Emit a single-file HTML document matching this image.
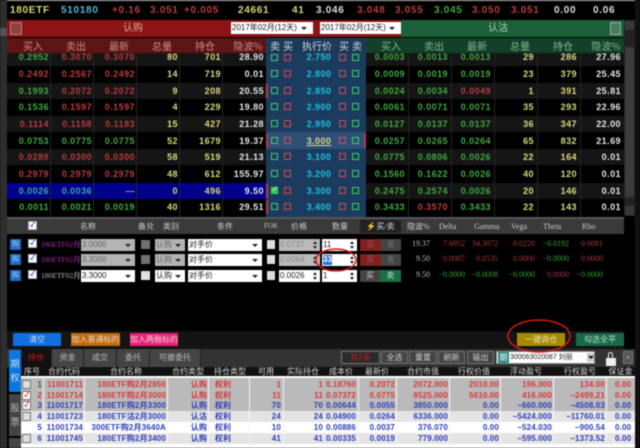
<!DOCTYPE html>
<html><head><meta charset="utf-8"><style>
html,body{margin:0;padding:0;background:#000}
#p{position:relative;width:640px;height:448px;overflow:hidden;background:#000;font:9px "Liberation Sans","WenQuanYi Zen Hei","Noto Sans CJK SC",sans-serif;color:#ddd;filter:blur(.45px)}
#p div,#p span,#p b{position:absolute;white-space:nowrap}
.t span{top:4px;font-size:10px;letter-spacing:.7px;font-weight:bold}
.h span{top:0;font:10px "Noto Sans CJK SC","WenQuanYi Zen Hei",sans-serif;line-height:15px;text-align:center}
.r{left:7px;width:617px;height:17px}
.r span{top:3px;width:42px;text-align:right;line-height:11px;letter-spacing:.45px;font-size:9px;font-weight:bold}
.r span:nth-child(1){left:0}.r span:nth-child(2){left:43px}.r span:nth-child(3){left:86px}.r span:nth-child(4){left:129px}.r span:nth-child(5){left:172px}.r span:nth-child(6){left:215px}
.r span:nth-child(7){left:294px;width:36px;text-align:center;color:#20c0e0}
.r span:nth-child(8){left:356px}.r span:nth-child(9){left:399px}.r span:nth-child(10){left:442px}.r span:nth-child(11){left:485px}.r span:nth-child(12){left:528px}.r span:nth-child(13){left:572px}
.r span:nth-child(4),.r span:nth-child(5),.r span:nth-child(11),.r span:nth-child(12){color:#d8d880}
.r span:nth-child(6),.r span:nth-child(13){color:#e4e4e4}
.r span.g{color:#3fa83f}.r span.e{color:#b83c3c}
.bk{width:5px;height:5px;border:1.5px solid #3fd060}
.bk.x{border-color:#d84c58}
.v{top:53px;width:1px;height:164px;background:#242424}
.sel{height:12px;background:#fff;color:#222;font:8px "Liberation Sans","WenQuanYi Zen Hei",sans-serif;line-height:12px;padding-left:1px;box-sizing:border-box}
.sel.o{background:#b4b4b4;color:#666}
.sel i{position:absolute;right:4px;top:5px;border:3px solid transparent;border-top:3px solid #222;border-bottom:0}
.spin i{position:absolute;right:3px;top:2px;border:2.5px solid transparent;border-bottom:3px solid #222;border-top:0}
.spin u{position:absolute;right:3px;top:7px;border:2.5px solid transparent;border-top:3px solid #222;border-bottom:0}
.ck{width:7px;height:7px;background:#fff;border:1px solid #aaa;color:#1040c0;font-size:7px;line-height:7px;text-align:center;font-weight:bold}
.bl{left:10px;width:11px;height:11px;background:#1a6ec8;color:#bcd;font:7px/11px "WenQuanYi Zen Hei",sans-serif;text-align:center}
.lh span{top:222px;font:8px "Liberation Serif","WenQuanYi Zen Hei",serif;color:#ccc;line-height:9px}
.gr{font:7.5px/12px "Liberation Serif","WenQuanYi Zen Hei",serif}
.lr span.n{font:8px/12px "Liberation Serif",serif;text-align:right;width:38px}
.btn{top:333px;height:13px;color:#e8d8c8;font:8px/13px "WenQuanYi Zen Hei","Noto Sans CJK SC",sans-serif;text-align:center}
.tab{top:349px;height:18px;background:#444;color:#bbb;font:8px/18px "WenQuanYi Zen Hei",sans-serif;text-align:center;border-right:1px solid #222;box-sizing:border-box}
.tb{top:351px;height:13px;background:#444;color:#ccc;border:1px solid #777;font:8px/11px "WenQuanYi Zen Hei",sans-serif;text-align:center;box-sizing:border-box}
.bh span{top:367px;height:10px;color:#ddd;font:8px/10px "WenQuanYi Zen Hei",sans-serif;text-align:center}
.br{left:21px;width:614px;height:11px}
.br span{top:0;line-height:11px;font-size:8px;letter-spacing:.15px;text-align:right;font-weight:bold}
.br span:nth-child(1){left:1px;width:20px}
.br span:nth-child(2){left:18px;width:44px}
.br span:nth-child(3){left:61px;width:84px}
.br span:nth-child(4){left:146px;width:40px}
.br span:nth-child(5){left:186px;width:32px;text-align:center}
.br span:nth-child(6){left:226px;width:34px}
.br span:nth-child(7){left:260px;width:42px}
.br span:nth-child(8){left:300px;width:35px}
.br span:nth-child(9){left:335px;width:39px}
.br span:nth-child(10){left:374px;width:53px}
.br span:nth-child(11){left:427px;width:51px}
.br span:nth-child(12){left:478px;width:53px}
.br span:nth-child(13){left:531px;width:53px}
.br span:nth-child(14){left:594px;width:20px;text-align:left}
.re span{color:#d83838}.bu span{color:#3040b8}
.bc{left:22px;width:7px;height:7px;background:#ddd;border:1px solid #777;color:#d01818;font-size:7px;line-height:7px;text-align:center;font-weight:bold}
.cl{top:378px;width:1px;height:70px;background:#f4f4f4}
.mb{height:12px;font:8px/12px "WenQuanYi Zen Hei",sans-serif;text-align:center}
</style></head><body><div id="p">
<div style="left:0;top:0;width:640px;height:1px;background:#bbb"></div>
<div style="left:0;top:0;width:7px;height:448px;background:#2e2e2e"></div>
<div style="left:0;top:28px;width:7px;height:8px;background:#555"></div>
<div style="left:635px;top:0;width:5px;height:448px;background:#111"></div>

<div class="t" style="left:0;top:1px;width:630px;height:18px">
<span style="left:10px;color:#d8d870">180ETF</span><span style="left:61px;color:#50b8d8">510180</span><span style="left:112px;color:#b83c3c">+0.16</span><span style="left:150px;color:#b83c3c">3.051</span><span style="left:184px;color:#b83c3c">+0.005</span><span style="left:238px;color:#d8d870">24661</span><span style="left:292px;color:#d8d870">41</span><span style="left:316px;color:#ddd">3.046</span><span style="left:357px;color:#b83c3c">3.048</span><span style="left:395px;color:#b83c3c">3.055</span><span style="left:434px;color:#3fa83f">3.045</span><span style="left:472px;color:#b83c3c">3.050</span><span style="left:511px;color:#b83c3c">3.051</span><span style="left:554px;color:#ddd">0.00</span><span style="left:593px;color:#ddd">0.06</span></div>

<div style="left:7px;top:20px;width:394px;height:17px;background:#8c1414"></div>
<div style="left:401px;top:20px;width:223px;height:17px;background:#1b6038"></div>
<div style="left:10px;top:22px;width:10px;height:11px;border:1px solid #c08080;background:#8c4040"></div>
<div style="left:610px;top:22px;width:9px;height:11px;border:1px solid #90b8a0;background:#4a7a60"></div>
<div style="left:123px;top:21px;font:10px/15px 'WenQuanYi Zen Hei',sans-serif;color:#d8b0a8">认购</div>
<div style="left:488px;top:21px;font:10px/15px 'WenQuanYi Zen Hei',sans-serif;color:#b0d0b8">认沽</div>
<div class="sel" style="left:231px;top:22px;width:82px">2017年02月(12天)<i style="right:6px"></i></div>
<div class="sel" style="left:320px;top:22px;width:81px">2017年02月(12天)<i style="right:6px"></i></div>

<div style="left:7px;top:38px;width:259px;height:15px;background:#5e1414"></div>
<div style="left:266px;top:38px;width:100px;height:15px;background:#1b3a58"></div>
<div style="left:366px;top:38px;width:258px;height:15px;background:#124028"></div>
<div class="h" style="left:0;top:38px;width:640px;height:15px">
<span style="left:18px;width:30px;color:#c89088">买入</span><span style="left:61px;width:30px;color:#c89088">卖出</span><span style="left:104px;width:30px;color:#c89088">最新</span><span style="left:147px;width:30px;color:#c89088">总量</span><span style="left:190px;width:30px;color:#c89088">持仓</span><span style="left:231px;width:34px;color:#c89088">隐波%</span>
<span style="left:269px;width:12px;color:#d0d8e0">卖</span><span style="left:282px;width:12px;color:#d0d8e0">买</span><span style="left:299px;width:36px;color:#d0d8e0">执行价</span><span style="left:338px;width:12px;color:#d0d8e0">买</span><span style="left:351px;width:12px;color:#d0d8e0">卖</span>
<span style="left:376px;width:30px;color:#80b890">买入</span><span style="left:419px;width:30px;color:#80b890">卖出</span><span style="left:462px;width:30px;color:#80b890">最新</span><span style="left:505px;width:30px;color:#80b890">总量</span><span style="left:548px;width:30px;color:#80b890">持仓</span><span style="left:589px;width:34px;color:#80b890">隐波%</span></div>

<div style="left:7px;top:53px;width:617px;height:13px;background:#151515"></div>
<div style="left:7px;top:83px;width:617px;height:16px;background:#151515"></div>
<div style="left:7px;top:116px;width:617px;height:16px;background:#151515"></div>
<div style="left:7px;top:149px;width:617px;height:16px;background:#151515"></div>
<div style="left:7px;top:183px;width:259px;height:16px;background:#00008c"></div>
<div style="left:366px;top:183px;width:258px;height:16px;background:#151515"></div>
<div style="left:266px;top:53px;width:100px;height:164px;background:#1b3c5e"></div>
<div style="left:266px;top:132px;width:100px;height:17px;background:#2e5078"></div>
<div class="v" style="left:50px"></div><div class="v" style="left:93px"></div><div class="v" style="left:136px"></div><div class="v" style="left:179px"></div><div class="v" style="left:222px"></div>
<div class="v" style="left:408px"></div><div class="v" style="left:451px"></div><div class="v" style="left:494px"></div><div class="v" style="left:537px"></div><div class="v" style="left:580px"></div>

<div class="r" style="top:49px"><span class="g">0.2952</span><span class="e">0.3070</span><span class="e">0.3070</span><span>80</span><span>701</span><span>28.90</span><span>2.750</span><span class="g">0.0003</span><span class="g">0.0013</span><span class="g">0.0013</span><span>29</span><span>286</span><span>27.96</span></div>
<div class="r" style="top:66px"><span class="e">0.2492</span><span class="e">0.2567</span><span class="e">0.2492</span><span>14</span><span>719</span><span>0.01</span><span>2.800</span><span class="g">0.0009</span><span class="g">0.0019</span><span class="g">0.0019</span><span>23</span><span>379</span><span>25.45</span></div>
<div class="r" style="top:83px"><span class="g">0.1993</span><span class="e">0.2072</span><span class="e">0.2072</span><span>9</span><span>208</span><span>20.55</span><span>2.850</span><span class="g">0.0024</span><span class="g">0.0034</span><span class="e">0.0049</span><span>1</span><span>391</span><span>25.81</span></div>
<div class="r" style="top:99px"><span class="g">0.1536</span><span class="e">0.1597</span><span class="e">0.1597</span><span>4</span><span>229</span><span>19.80</span><span>2.900</span><span class="g">0.0061</span><span class="g">0.0071</span><span class="g">0.0071</span><span>35</span><span>293</span><span>22.96</span></div>
<div class="r" style="top:116px"><span class="e">0.1114</span><span class="e">0.1158</span><span class="e">0.1183</span><span>15</span><span>427</span><span>21.28</span><span>2.950</span><span class="g">0.0127</span><span class="g">0.0137</span><span class="g">0.0137</span><span>36</span><span>347</span><span>22.00</span></div>
<div class="r" style="top:133px"><span class="g">0.0753</span><span class="g">0.0775</span><span class="g">0.0775</span><span>52</span><span>1679</span><span>19.37</span><span style="color:#d8d880;text-decoration:underline">3.000</span><span class="g">0.0257</span><span class="g">0.0265</span><span class="g">0.0264</span><span>65</span><span>832</span><span>21.69</span></div>
<div class="r" style="top:149px"><span class="e">0.0289</span><span class="e">0.0300</span><span class="e">0.0300</span><span>58</span><span>519</span><span>21.13</span><span>3.100</span><span class="g">0.0775</span><span class="g">0.0806</span><span class="g">0.0026</span><span>22</span><span>164</span><span>0.01</span></div>
<div class="r" style="top:166px"><span class="e">0.2979</span><span class="e">0.2979</span><span class="e">0.2979</span><span>48</span><span>612</span><span>155.97</span><span>3.200</span><span class="g">0.1560</span><span class="g">0.1622</span><span class="g">0.0026</span><span>40</span><span>120</span><span>0.01</span></div>
<div class="r" style="top:183px"><span style="color:#40a8a0">0.0026</span><span style="color:#40a8a0">0.0036</span><span style="color:#9098e0">—</span><span>0</span><span>496</span><span>9.50</span><span>3.300</span><span class="g">0.2475</span><span class="g">0.2574</span><span class="g">0.0026</span><span>20</span><span>146</span><span>0.01</span></div>
<div class="r" style="top:199px"><span class="g">0.0011</span><span class="g">0.0021</span><span class="g">0.0019</span><span>40</span><span>1316</span><span>29.51</span><span>3.400</span><span class="g">0.3433</span><span class="e">0.3570</span><span class="g">0.3433</span><span>22</span><span>143</span><span>0.01</span></div>

<div class="bk" style="left:271px;top:54px"></div><div class="bk x" style="left:284px;top:54px"></div><div class="bk x" style="left:339px;top:54px"></div><div class="bk" style="left:352px;top:54px"></div>
<div class="bk" style="left:271px;top:70px"></div><div class="bk x" style="left:284px;top:70px"></div><div class="bk x" style="left:339px;top:70px"></div><div class="bk" style="left:352px;top:70px"></div>
<div class="bk" style="left:271px;top:87px"></div><div class="bk x" style="left:284px;top:87px"></div><div class="bk x" style="left:339px;top:87px"></div><div class="bk" style="left:352px;top:87px"></div>
<div class="bk" style="left:271px;top:103px"></div><div class="bk x" style="left:284px;top:103px"></div><div class="bk x" style="left:339px;top:103px"></div><div class="bk" style="left:352px;top:103px"></div>
<div class="bk" style="left:271px;top:120px"></div><div class="bk x" style="left:284px;top:120px"></div><div class="bk x" style="left:339px;top:120px"></div><div class="bk" style="left:352px;top:120px"></div>
<div class="bk" style="left:271px;top:137px"></div><div class="bk x" style="left:284px;top:137px"></div><div class="bk x" style="left:339px;top:137px"></div><div class="bk" style="left:352px;top:137px"></div>
<div class="bk" style="left:271px;top:153px"></div><div class="bk x" style="left:284px;top:153px"></div><div class="bk x" style="left:339px;top:153px"></div><div class="bk" style="left:352px;top:153px"></div>
<div class="bk" style="left:271px;top:170px"></div><div class="bk x" style="left:284px;top:170px"></div><div class="bk x" style="left:339px;top:170px"></div><div class="bk" style="left:352px;top:170px"></div>
<div class="bk" style="left:271px;top:187px;background:#30c850;color:#fff;font-size:6px;line-height:5px;text-align:center">✓</div><div class="bk x" style="left:284px;top:187px"></div><div class="bk x" style="left:339px;top:187px"></div><div class="bk" style="left:352px;top:187px"></div>
<div class="bk" style="left:271px;top:203px"></div><div class="bk x" style="left:284px;top:203px"></div><div class="bk x" style="left:339px;top:203px"></div><div class="bk" style="left:352px;top:203px"></div>
<div style="left:266px;top:84px;width:2px;height:14px;background:#b83c48"></div><div style="left:266px;top:134px;width:2px;height:14px;background:#b83c48"></div><div style="left:266px;top:184px;width:2px;height:14px;background:#b83c48"></div><div style="left:266px;top:200px;width:2px;height:14px;background:#b83c48"></div><div style="left:364px;top:134px;width:2px;height:14px;background:#b83c48"></div>

<div style="left:624px;top:20px;width:11px;height:196px;background:#222"></div>
<div style="left:625px;top:47px;width:9px;height:150px;background:#3c3c3c"></div>
<div style="left:625px;top:21px;width:9px;height:9px;background:#3a3a3a"></div>
<div style="left:625px;top:206px;width:9px;height:9px;background:#3a3a3a"></div>

<div style="left:7px;top:217px;width:617px;height:2px;background:#555"></div>
<div style="left:7px;top:219px;width:617px;height:15px;background:#3a3a3a"></div>
<div class="lh">
<div class="ck" style="left:28px;top:221px">✓</div>
<span style="left:80px">名称</span><span style="left:138px">备兑</span><span style="left:163px">类别</span><span style="left:217px">条件</span><span style="left:264px;font-size:7px">FOK</span><span style="left:291px">价格</span><span style="left:332px">数量</span>
<span style="left:360px;top:220px;width:41px;height:13px;background:#222;line-height:13px;text-align:center;color:#ddd">⚡买/卖</span>
<span style="left:407px">隐波%</span><span style="left:439px">Delta</span><span style="left:474px">Gamma</span><span style="left:511px">Vega</span><span style="left:543px">Theta</span><span style="left:582px">Rho</span></div>

<div class="bl" style="top:239px">购</div><div class="bl" style="top:254px">购</div><div class="bl" style="top:270px">购</div>
<div class="ck" style="left:28px;top:239px">✓</div><div class="ck" style="left:28px;top:254px">✓</div><div class="ck" style="left:28px;top:270px">✓</div>
<span class="gr" style="left:41px;top:239px;color:#b030b0">180ETF02月</span><span class="gr" style="left:41px;top:254px;color:#b030b0">180ETF02月</span><span class="gr" style="left:41px;top:270px;color:#bbb">180ETF02月</span>
<div class="sel o" style="left:81px;top:239px;width:54px">3.0000<i></i></div><div class="sel o" style="left:81px;top:254px;width:54px">3.3000<i></i></div><div class="sel" style="left:81px;top:270px;width:54px">3.3000<i></i></div>
<div style="left:141px;top:240px;width:9px;height:9px;background:#707070"></div><div style="left:141px;top:255px;width:9px;height:9px;background:#707070"></div><div style="left:141px;top:271px;width:9px;height:9px;background:#e0e0e0"></div>
<div class="sel o" style="left:155px;top:239px;width:30px">认购<i></i></div><div class="sel o" style="left:155px;top:254px;width:30px">认购<i></i></div><div class="sel" style="left:155px;top:270px;width:30px">认购<i></i></div>
<div class="sel" style="left:188px;top:239px;width:74px">对手价<i></i></div><div class="sel" style="left:188px;top:254px;width:74px">对手价<i></i></div><div class="sel" style="left:188px;top:270px;width:74px">对手价<i></i></div>
<div style="left:267px;top:240px;width:8px;height:9px;background:#ddd"></div><div style="left:267px;top:255px;width:8px;height:9px;background:#ddd"></div><div style="left:267px;top:271px;width:8px;height:9px;background:#ddd"></div>
<div class="sel o spin" style="left:279px;top:239px;width:41px;background:#bbb;color:#888">0.0737<i></i><u></u></div><div class="sel o spin" style="left:279px;top:254px;width:41px;background:#bbb;color:#888">0.0064<i></i><u></u></div><div class="sel spin" style="left:279px;top:270px;width:41px">0.0026<i></i><u></u></div>
<div class="sel spin" style="left:322px;top:239px;width:35px">11<i></i><u></u></div><div class="sel spin" style="left:322px;top:254px;width:35px"><b style="left:1px;top:1px;width:9px;height:10px;background:#2a70d8;color:#fff;line-height:10px">33</b><i></i><u></u></div><div class="sel spin" style="left:322px;top:270px;width:35px">1<i></i><u></u></div>
<div class="mb" style="left:360px;top:239px;width:21px;background:#802020;color:#a05050">买</div><div class="mb" style="left:381px;top:239px;width:20px;background:#444;color:#777">卖</div>
<div class="mb" style="left:360px;top:254px;width:21px;background:#802020;color:#a05050">买</div><div class="mb" style="left:381px;top:254px;width:20px;background:#444;color:#777">卖</div>
<div class="mb" style="left:360px;top:270px;width:20px;background:#444;color:#ccc">买</div><div class="mb" style="left:380px;top:270px;width:21px;background:#1b7040;color:#cde">卖</div>

<div class="lr" style="left:0;top:0">
<span class="n" style="left:392px;top:238px;color:#bbb">19.37</span><span class="n" style="left:427px;top:238px;color:#a83838">7.6952</span><span class="n" style="left:460px;top:238px;color:#a83838">34.3072</span><span class="n" style="left:497px;top:238px;color:#a83838">0.0220</span><span class="n" style="left:531px;top:238px;color:#38a038">−0.0192</span><span class="n" style="left:565px;top:238px;color:#a83838">0.0081</span>
<span class="n" style="left:392px;top:253px;color:#bbb">9.50</span><span class="n" style="left:427px;top:253px;color:#a83838">0.0007</span><span class="n" style="left:460px;top:253px;color:#a83838">0.0535</span><span class="n" style="left:497px;top:253px;color:#a83838">0.0000</span><span class="n" style="left:531px;top:253px;color:#38a038">−0.0000</span><span class="n" style="left:565px;top:253px;color:#a83838">0.0000</span>
<span class="n" style="left:392px;top:269px;color:#bbb">9.50</span><span class="n" style="left:427px;top:269px;color:#38a038">−0.0000</span><span class="n" style="left:460px;top:269px;color:#38a038">−0.0008</span><span class="n" style="left:497px;top:269px;color:#38a038">−0.0000</span><span class="n" style="left:531px;top:269px;color:#a83838">0.0000</span><span class="n" style="left:565px;top:269px;color:#38a038">−0.0000</span></div>

<div style="left:7px;top:331px;width:617px;height:18px;background:#141414"></div>
<div class="btn" style="left:13px;width:48px;background:#1070e0;color:#cde">清空</div>
<div class="btn" style="left:71px;width:49px;background:#c06a10">加入普通标的</div>
<div class="btn" style="left:130px;width:48px;background:#e8207a">加入两融标的</div>
<div class="btn" style="left:517px;width:48px;background:#a88a00;color:#e8e0b0">一键调仓</div>
<div class="btn" style="left:576px;width:48px;background:#1a6a48;color:#b8dcc8">勾选全平</div>

<div style="left:7px;top:349px;width:628px;height:18px;background:#333"></div>
<div class="tab" style="left:21px;width:31px;background:#111;color:#d81818">持仓</div><div class="tab" style="left:52px;width:32px">资金</div><div class="tab" style="left:84px;width:33px">成交</div><div class="tab" style="left:117px;width:33px">委托</div><div class="tab" style="left:150px;width:51px">可撤委托</div>
<div style="left:9px;top:350px;width:12px;height:42px;background:#0a78e0;color:#dde;font:9px/14px 'WenQuanYi Zen Hei';text-align:center;white-space:normal;padding-top:7px;box-sizing:border-box">期<br>权</div>
<div style="left:9px;top:394px;width:12px;height:42px;background:#444;color:#bbb;font:9px/14px 'WenQuanYi Zen Hei';text-align:center;white-space:normal;padding-top:7px;box-sizing:border-box">股<br>票</div>
<div style="left:9px;top:438px;width:12px;height:10px;background:#444"></div>

<div class="tb" style="left:341px;width:39px;background:#2a2a2a;color:#d81818">共7条</div><div class="tb" style="left:381px;width:27px">全选</div><div class="tb" style="left:409px;width:28px">重置</div><div class="tb" style="left:438px;width:27px">刷新</div><div class="tb" style="left:467px;width:27px">输出</div>
<div class="tb" style="left:496px;width:99px;background:#fff;color:#222;text-align:left;padding-left:13px;border-color:#888;font-size:7px">300063020087 刘丽</div>
<div style="left:498px;top:352px;width:11px;height:11px;background:#2a8a80;color:#fff;font:8px/11px 'WenQuanYi Zen Hei';text-align:center">期</div>
<div style="left:587px;top:353px;width:7px;height:9px;background:#ccc"></div><div style="left:588px;top:356px;border:3px solid transparent;border-top:3px solid #111;border-bottom:0"></div>
<div style="left:606px;top:358px;width:10px;height:8px;background:#eee"></div><div style="left:608px;top:352px;width:3px;height:6px;border:1.5px solid #eee;border-bottom:0;border-radius:3px 3px 0 0"></div>
<div class="tb" style="left:623px;width:10px;color:#aaa;background:#555">×</div>

<div style="left:21px;top:367px;width:614px;height:10px;background:#111"></div>
<div class="bh"><span style="left:22px;width:20px">序号</span><span style="left:46px;width:36px">合约代码</span><span style="left:108px;width:36px">合约名称</span><span style="left:170px;width:36px">合约类型</span><span style="left:212px;width:36px">持仓类型</span><span style="left:256px;width:20px">可用</span><span style="left:285px;width:36px">实际持仓</span><span style="left:326px;width:30px">成本价</span><span style="left:362px;width:30px">最新价</span><span style="left:405px;width:36px">合约市值</span><span style="left:456px;width:36px">行权价值</span><span style="left:508px;width:36px">浮动盈亏</span><span style="left:562px;width:36px">行权盈亏</span><span style="left:607px;width:27px">保证金</span></div>
<div style="left:21px;top:376px;width:614px;height:2px;background:#fff"></div>

<div style="left:21px;top:378px;width:614px;height:33px;background:#bababa"></div>
<div style="left:21px;top:411px;width:614px;height:11px;background:#e4e4e4"></div>
<div style="left:21px;top:422px;width:614px;height:11px;background:#fff"></div>
<div style="left:21px;top:433px;width:614px;height:11px;background:#e4e4e4"></div>
<div style="left:21px;top:444px;width:614px;height:4px;background:#fff"></div>
<div class="cl" style="left:43px"></div><div class="cl" style="left:84px"></div><div class="cl" style="left:167px"></div><div class="cl" style="left:208px"></div><div class="cl" style="left:249px"></div><div class="cl" style="left:283px"></div><div class="cl" style="left:358px"></div><div class="cl" style="left:396px"></div><div class="cl" style="left:449px"></div><div class="cl" style="left:500px"></div><div class="cl" style="left:553px"></div><div class="cl" style="left:606px"></div>

<div class="br re" style="top:379px"><span style="color:#555">1</span><span>11001711</span><span>180ETF购2月2850</span><span>认购</span><span>权利</span><span>1</span><span>1</span><span>0.18760</span><span>0.2072</span><span>2072.000</span><span>2010.00</span><span>196.000</span><span>134.00</span><span>0.00</span></div>
<div class="br re" style="top:390px"><span>2</span><span>11001714</span><span>180ETF购2月3000</span><span>认购</span><span>权利</span><span>11</span><span>11</span><span>0.07372</span><span>0.0775</span><span>8525.000</span><span>5610.00</span><span>416.000</span><span>−2499.21</span><span>0.00</span></div>
<div class="br bu" style="top:400px"><span>3</span><span>11001717</span><span>180ETF购2月3300</span><span>认购</span><span>权利</span><span>70</span><span>70</span><span>0.00644</span><span>0.0055</span><span>3850.000</span><span>0.00</span><span>−660.000</span><span>−4508.03</span><span>0.00</span></div>
<div class="br bu" style="top:411px"><span>4</span><span>11001723</span><span>180ETF沽2月3000</span><span>认沽</span><span>权利</span><span>24</span><span>24</span><span>0.04900</span><span>0.0264</span><span>6336.000</span><span>0.00</span><span>−5424.000</span><span>−11760.01</span><span>0.00</span></div>
<div class="br bu" style="top:422px"><span>5</span><span>11001734</span><span>300ETF购2月3640A</span><span>认购</span><span>权利</span><span>10</span><span>10</span><span>0.00886</span><span>0.0037</span><span>376.070</span><span>0.00</span><span>−524.030</span><span>−900.54</span><span>0.00</span></div>
<div class="br bu" style="top:433px"><span>6</span><span>11001745</span><span>180ETF购2月3400</span><span>认购</span><span>权利</span><span>41</span><span>41</span><span>0.00335</span><span>0.0019</span><span>779.000</span><span>0.00</span><span>−595.000</span><span>−1373.52</span><span>0.00</span></div>
<div class="bc" style="top:380px"></div><div class="bc" style="top:391px;background:#fff">✓</div><div class="bc" style="top:401px;background:#fff">✓</div><div class="bc" style="top:412px"></div><div class="bc" style="top:434px"></div>

<svg width="640" height="448" style="position:absolute;left:0;top:0">
<ellipse cx="336" cy="260" rx="20" ry="11" fill="none" stroke="#d81818" stroke-width="1.5"/>
<ellipse cx="539" cy="336" rx="31" ry="16" fill="none" stroke="#d81818" stroke-width="1.5"/>
</svg>
</div></body></html>
